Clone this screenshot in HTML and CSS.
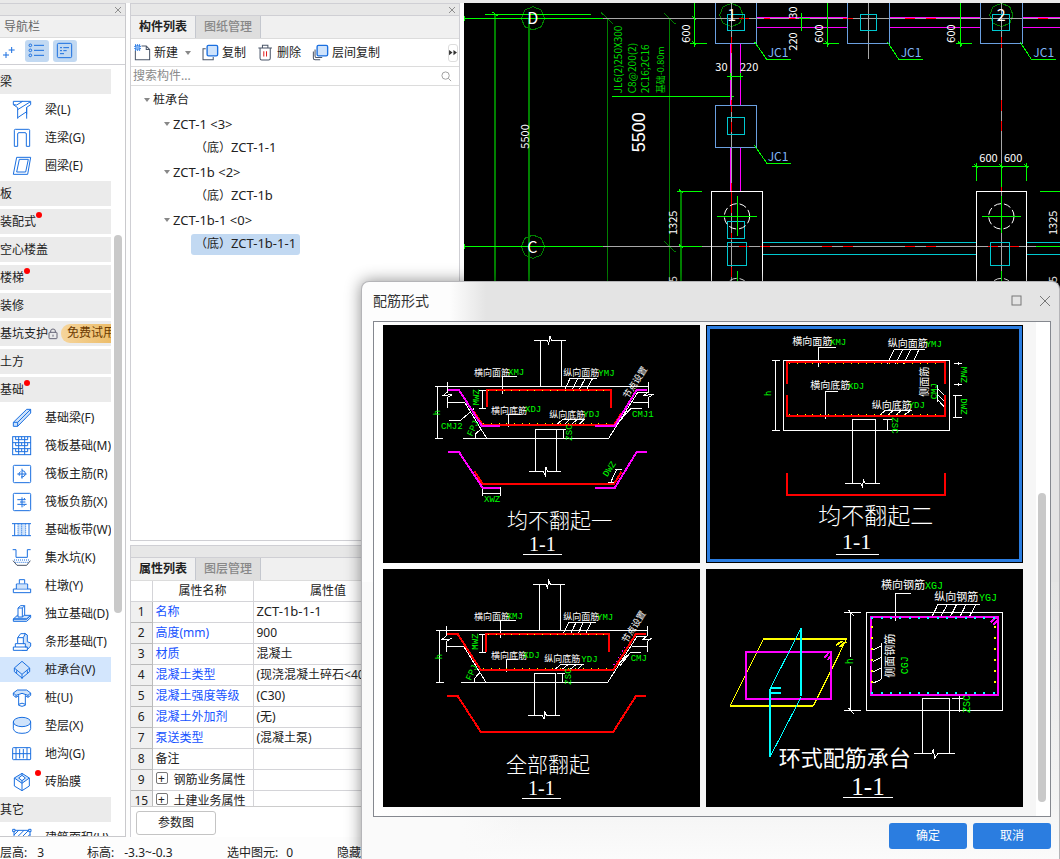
FILE: index.html
```html
<!DOCTYPE html>
<html lang="zh-CN">
<head>
<meta charset="utf-8">
<title>配筋形式</title>
<link rel="stylesheet" href="styles.css">
</head>
<body>
<div class="app">
  <div class="ribbon-edge"></div>
  <div class="workspace">
    <nav class="nav">
      <div class="panel-bar"><button class="panel-close" aria-label="关闭导航栏"><svg viewBox="0 0 8 8"><path d="M1 1L7 7M7 1L1 7"/></svg></button></div>
      <h2 class="nav-title">导航栏</h2>
      <div class="nav-tools">
        <button class="nav-tool plain" aria-label="添加"><svg viewBox="0 0 72 66"><path d="M27 36V54M18 45H36M44 21V39M35 30H53"/></svg></button>
        <button class="nav-tool" aria-label="列表"><svg viewBox="75 120 72 66"><circle cx="91" cy="136" r="4"/><circle cx="91" cy="151" r="4"/><circle cx="91" cy="166" r="4"/><path d="M102 136H132M102 151H132M102 166H132"/></svg></button>
        <button class="nav-tool" aria-label="详情"><svg viewBox="159 120 72 66"><rect x="172" y="130" width="43" height="43" rx="4"/><path d="M180 143H186M190 143H207M180 152H186M190 152H200M180 161H192"/></svg></button>
      </div>
      <div class="nav-body">
        <ul class="nav-list">
          <li class="group">梁</li>
          <li><button class="item"><svg class="ico" viewBox="36 297 60 60"><path d="M40 301H92V311L80 319V353M40 301V311L53 320V353M53 326L90 303M53 350L80 332M40 311L50 312L68 301M80 319V340"/></svg>梁(L)</button></li>
          <li><button class="item"><svg class="ico" viewBox="36 381 60 60"><path d="M43 436V388Q43 385 46 385H86Q89 385 89 388V436H79V399Q79 395 75 395H57Q53 395 53 399V436Z"/></svg>连梁(G)</button></li>
          <li><button class="item"><svg class="ico" viewBox="36 465 60 60"><path d="M50 469H92L83 520H40ZM58 475H85L77 513H50Z"/></svg>圈梁(E)</button></li>
          <li class="group">板</li>
          <li class="group">装配式<i class="dot"></i></li>
          <li class="group">空心楼盖</li>
          <li class="group">楼梯<i class="dot"></i></li>
          <li class="group">装修</li>
          <li class="group">基坑支护<svg class="lock" viewBox="0 0 30 36"><rect x="3" y="13" width="24" height="19" rx="2"/><path d="M8 13V9Q8 3 15 3Q22 3 22 9V13M15 20V26"/></svg><span class="trial">免费试用</span></li>
          <li class="group">土方</li>
          <li class="group">基础<i class="dot"></i></li>
          <li><button class="item"><svg class="ico" viewBox="36 366 60 60"><path class="f" d="M40 409L80 370H92V381L53 421H40Z"/><path d="M40 409H53V421M53 409L92 370"/></svg>基础梁(F)</button></li>
          <li><button class="item"><svg class="ico" viewBox="36 450 60 60"><rect x="38" y="452" width="54" height="54"/><path d="M38 470H92M38 488H92M56 452V506M74 452V506"/><path d="M47 452V461H65V452M65 461H83V452M47 470V479H65V470M65 479H83V470M47 488V497H65V488M65 497H83V488"/></svg>筏板基础(M)</button></li>
          <li><button class="item"><svg class="ico" viewBox="36 534 60 60"><rect x="40" y="538" width="52" height="52" rx="3"/><path d="M66 548V578M52 564H80M66 554Q76 554 76 562Q76 573 63 573M62 557Q54 560 58 569"/></svg>筏板主筋(R)</button></li>
          <li><button class="item"><svg class="ico" viewBox="36 618 60 60"><rect x="40" y="622" width="52" height="52" rx="3"/><path d="M52 641H76L72 636M52 655H80M60 648H76M66 634V664M76 655L70 661"/></svg>筏板负筋(X)</button></li>
          <li><button class="item"><svg class="ico" viewBox="36 702 60 60"><path class="f" stroke="none" d="M54 713H77V749H54Z"/><path d="M36 713H93M36 749H93M44 713V749M87 713V749"/><path stroke-dasharray="3 3" d="M54 713V749M65 713V749M77 713V749"/></svg>基础板带(W)</button></li>
          <li><button class="item"><svg class="ico" viewBox="36 786 60 60"><path d="M38 791H48V814H82V791H92"/><path stroke-dasharray="3 3" d="M42 822H90M46 829H86"/><path class="gray" d="M39 824L51 838H80L91 824"/></svg>集水坑(K)</button></li>
          <li><button class="item"><svg class="ico" viewBox="36 15 60 60"><path d="M58 38V26H74V38M49 54V39H83V54M40 54H92V65H40Z"/><path class="f" stroke="none" d="M51 41H81V52H51Z"/></svg>柱墩(Y)</button></li>
          <li><button class="item"><svg class="ico" viewBox="36 99 60 60"><path class="f" d="M40 144L52 133H92L80 144ZM40 144H80L92 133V140L80 151H40Z"/><path fill="#fff" d="M54 138V111L62 104H74V132L67 138Z"/><path d="M54 111H67V138M67 111L74 104"/></svg>独立基础(D)</button></li>
          <li><button class="item"><svg class="ico" viewBox="36 183 60 60"><path class="f" d="M80 238L92 225V216L82 212V192L74 187L66 200V238Z"/><path fill="#fff" d="M40 238V228H46V218H53V200L62 188H76L70 200V218H76V228H82V238Z"/><path d="M53 200H70M46 228H80M53 218H72"/></svg>条形基础(T)</button></li>
          <li><button class="item on"><svg class="ico" viewBox="36 267 60 60"><path class="f" d="M66 271L89 291L66 310L43 291Z"/><path d="M43 291V302L66 321M89 291V302L66 321M66 310V324M50 298V307M82 298V307"/></svg>桩承台(V)</button></li>
          <li><button class="item"><svg class="ico" viewBox="36 351 60 60"><path class="f" d="M40 366L52 357H80L92 366L84 373L66 367L48 373Z"/><path d="M40 366V373L48 379L56 374M92 366V373L84 379L76 374M48 373V379M84 373V379M56 373V403Q66 409 76 403V373M56 400Q66 393 76 400"/></svg>桩(U)</button></li>
          <li><button class="item"><svg class="ico" viewBox="36 435 60 60"><path d="M40 452V473Q43 487 66 487Q89 487 92 473V452"/><ellipse class="f" cx="66" cy="453" rx="26" ry="14"/></svg>垫层(X)</button></li>
          <li><button class="item"><svg class="ico" viewBox="36 519 60 60"><rect x="38" y="530" width="54" height="36" rx="2"/><path d="M38 548H92M48 530V566M59 534V562M70 534V562M81 530V566"/></svg>地沟(G)</button></li>
          <li><button class="item"><svg class="ico" viewBox="36 603 60 60"><path class="f" d="M66 607L88 621L66 637L43 621Z"/><path fill="#fff" d="M66 613L76 621L66 629L56 621Z"/><path d="M43 621V645L66 659L88 645V621M66 637V659M66 607V613M66 637V629"/></svg><i class="dot float"></i>砖胎膜</button></li>
          <li class="group">其它</li>
          <li><button class="item"><svg class="ico" viewBox="36 771 60 60"><path d="M42 778H90V826H42ZM42 792L56 778M42 808L72 778M42 822L86 778M54 826L90 790M70 826L90 806"/><path fill="#fff" d="M38 775H45V782H38ZM86 775H93V782H86Z"/></svg>建筑面积(U)</button></li>
        </ul>
        <div class="nav-scroll"></div>
      </div>
    </nav>

    <div class="side">
      <section class="panel components">
        <div class="panel-bar"><button class="panel-close" aria-label="关闭构件列表"><svg viewBox="0 0 8 8"><path d="M1 1L7 7M7 1L1 7"/></svg></button></div>
        <div class="tabs"><button class="tab active">构件列表</button><button class="tab">图纸管理</button></div>
        <div class="toolbar">
          <button class="tool"><svg class="tico" viewBox="18 130 50 50"><path class="gray" d="M22 149V176H64V146L54 136H40M54 136V146H64"/><path class="chk" d="M21 133H36V148H21Z"/></svg>新建<i class="caret"></i></button>
          <button class="tool"><svg class="tico" viewBox="220 130 50 50"><path class="gray" d="M231 144H223V176H253V168"/><rect class="f" x="235" y="134" width="31" height="31" rx="4"/></svg>复制</button>
          <button class="tool"><svg class="tico" viewBox="390 130 50 50"><path class="gray" d="M394 142H434M406 141V134H422V141M399 142V172Q399 177 404 177H424Q429 177 429 172V142"/><path class="red" d="M410 151V167M418 151V167"/></svg>删除</button>
          <button class="tool"><svg class="tico" viewBox="556 130 50 50"><path class="gray" d="M560 152V171Q560 176 565 176H580M565 146V165Q565 170 570 170H586"/><rect class="f" x="571" y="134" width="31" height="31" rx="4"/></svg>层间复制</button>
          <button class="more" aria-label="更多"><svg viewBox="0 0 9 8"><path d="M0 1L4 4L0 7ZM5 1L9 4L5 7Z"/></svg></button>
        </div>
        <div class="search"><input type="text" placeholder="搜索构件..." aria-label="搜索构件"><svg viewBox="0 0 12 12"><circle cx="5" cy="5" r="4"/><path d="M8 8L11 11"/></svg></div>
        <ul class="tree">
          <li class="t1"><i class="caret"></i>桩承台</li>
          <li class="t2"><i class="caret"></i><span class="code">ZCT-1 &lt;3&gt;</span></li>
          <li class="t3"><span class="leaf">（底）<span class="code">ZCT-1-1</span></span></li>
          <li class="t2"><i class="caret"></i><span class="code">ZCT-1b &lt;2&gt;</span></li>
          <li class="t3"><span class="leaf">（底）<span class="code">ZCT-1b</span></span></li>
          <li class="t2"><i class="caret"></i><span class="code">ZCT-1b-1 &lt;0&gt;</span></li>
          <li class="t3"><span class="leaf on">（底）<span class="code">ZCT-1b-1-1</span></span></li>
        </ul>
      </section>
      <section class="panel props">
        <div class="panel-bar"></div>
        <div class="tabs"><button class="tab active">属性列表</button><button class="tab">图层管理</button></div>
        <div class="table-wrap">
          <table>
            <colgroup><col class="c1"><col class="c2"><col class="c3"><col></colgroup>
            <thead><tr><th></th><th>属性名称</th><th>属性值</th><th></th></tr></thead>
            <tbody>
              <tr><td>1</td><td class="key">名称</td><td><span class="code">ZCT-1b-1-1</span></td><td></td></tr>
              <tr><td>2</td><td class="key">高度(mm)</td><td>900</td><td></td></tr>
              <tr><td>3</td><td class="key">材质</td><td>混凝土</td><td></td></tr>
              <tr><td>4</td><td class="key">混凝土类型</td><td>(现浇混凝土碎石&lt;40)</td><td></td></tr>
              <tr><td>5</td><td class="key">混凝土强度等级</td><td>(C30)</td><td></td></tr>
              <tr><td>6</td><td class="key">混凝土外加剂</td><td>(无)</td><td></td></tr>
              <tr><td>7</td><td class="key">泵送类型</td><td>(混凝土泵)</td><td></td></tr>
              <tr><td>8</td><td>备注</td><td></td><td></td></tr>
              <tr><td>9</td><td><button class="plus" aria-label="展开">+</button>钢筋业务属性</td><td></td><td></td></tr>
              <tr><td>15</td><td><button class="plus" aria-label="展开">+</button>土建业务属性</td><td></td><td></td></tr>
            </tbody>
          </table>
        </div>
        <div class="props-foot"><button class="btn-plain">参数图</button></div>
      </section>
    </div>

    <main class="canvas">
      <svg class="cad" viewBox="12 9 1788 2505" preserveAspectRatio="xMinYMin slice" role="img" aria-label="平面图">
        <g class="dg w6"><path d="M105 43V1200M207 55V1200M663 574V1200"/></g>
        <g class="dg w3"><path d="M442 55V1200M628 55V1200M424 38L459 72M611 38L646 72M611 722L646 756M588 55H628M588 739H628"/><path d="M219 20L244 30L254 55L244 80L219 90L194 80L184 55L194 30ZM219 705L244 715L254 740L244 765L219 775L194 765L184 740L194 715ZM814 10L839 20L849 45L839 70L814 80L789 70L779 45L789 20ZM1624 10L1649 20L1659 45L1649 70L1624 80L1599 70L1589 45L1599 20Z"/></g>
        <g class="gr w3"><path d="M430 55H1800M430 739H1800"/></g>
        <g class="g w3"><path d="M12 55H430M75 43H392M12 739H430M663 739H725M651 574H725M456 290H822M98 36L112 48M656 568L670 580M656 733L670 745M12 48V62M12 732V746"/></g>
        <g class="mg w3"><path d="M812 130V316M812 441V574M842 130V316M842 441V574M890 52H1162M890 82H1162M1288 52H1562M1288 82H1562M1688 52H1800M1688 82H1800"/></g>
        <g class="gr w3"><path d="M815 9V1200M890 55H1162M1225 9V176M1624 9V1200"/></g>
        <g class="rd w3"><path d="M815 112V160M815 300V335M815 365V395M815 550V640M815 700V720M815 800V830M1624 110V145M1624 300V333M1624 362V394M1624 546V576M837 55H868M912 55H930M986 55H1008M1148 55H1180M1335 55H1365M1397 55H1428M1735 55H1765M837 739H868M900 739H930M1086 739H1116M1148 739H1179M1335 739H1365M1397 739H1428M1583 739H1614M1650 739H1677"/></g>
        <g class="bl w3"><path d="M765 9V130H890V9M765 316H890V441H765ZM1162 9V130H1288V9M1561 9V130H1687V9"/></g>
        <g class="cy w3"><path d="M802 43H853V92H802ZM802 353H853V403H802ZM802 664H853V715H802ZM802 727H859V796H802ZM1201 43H1250V92H1201ZM1597 43H1649V92H1597ZM1592 727H1649V796H1592ZM906 727H1550M906 764H1550M1700 727H1800M1700 764H1800"/></g>
        <g class="wh w3"><path d="M755 1200V574H906V1200M1550 1200V574H1700V1200"/><circle cx="831" cy="649" r="38" stroke-dasharray="22 9"/><circle cx="1624" cy="649" r="38" stroke-dasharray="22 9"/><circle cx="831" cy="873" r="38" stroke-dasharray="22 9"/><circle cx="1624" cy="873" r="38" stroke-dasharray="22 9"/></g>
        <g class="g w3"><path d="M771 649H890M831 588V708M1565 649H1684M1624 588V700M1624 812V850M831 812V850M703 9V142M690 130H741M1102 9V142M1090 130H1138M1500 9V142M1488 130H1536M1024 40V92M800 229H850M812 220V240M842 220V240M1018 55H1050M1537 499H1708M1549 490V544M1699 490V544M1624 490V560M1740 574H1800M1727 739H1800M883 125L920 178H992M1282 125L1316 178H1390M1680 125L1714 178H1788M883 436L920 489H992M697 124L709 136M697 49L709 61M1096 124L1108 136M1494 124L1506 136M1543 493L1555 505M1618 493L1630 505M1693 493L1705 505"/></g>
        <g class="cad-text">
          <text class="t48" x="202" y="73">D</text><text class="t48" x="202" y="758">C</text>
          <text class="t48" x="802" y="64">1</text><text class="t48" x="1610" y="64">2</text>
          <text class="t33" transform="translate(206 446) rotate(-90)">5500</text>
          <text class="wide" transform="translate(555 457) rotate(-90)">5500</text>
          <text class="t33" transform="translate(689 128) rotate(-90)">600</text>
          <text class="t33" transform="translate(1088 128) rotate(-90)">600</text>
          <text class="t33" transform="translate(1486 128) rotate(-90)">600</text>
          <text class="t33" transform="translate(1011 56) rotate(-90)">30</text>
          <text class="t33" transform="translate(1011 152) rotate(-90)">220</text>
          <text class="t33" transform="translate(650 705) rotate(-90)">1325</text>
          <text class="t33" transform="translate(1792 705) rotate(-90)">1325</text>
          <text class="t33" transform="translate(650 902) rotate(-90)">1325</text>
          <text class="t33" transform="translate(1792 902) rotate(-90)">1325</text>
          <text class="t33" x="766" y="214">30</text><text class="t33" x="840" y="214">220</text>
          <text class="t33" x="1558" y="486">600</text><text class="t33" x="1632" y="486">600</text>
        </g>
        <g class="cad-text green">
          <text class="t30" transform="translate(486 280) rotate(-90)">JL6(2)250X300</text>
          <text class="t30" transform="translate(528 280) rotate(-90)">C8@200(2)</text>
          <text class="t30" transform="translate(566 280) rotate(-90)">2C16;2C16</text>
          <text class="t27" transform="translate(612 280) rotate(-90)">基础-0.80m</text>
        </g>
        <g class="cad-text blue">
          <text class="t36" x="923" y="172">JC1</text><text class="t36" x="1322" y="172">JC1</text><text class="t36" x="1720" y="172">JC1</text><text class="t36" x="923" y="483">JC1</text>
        </g>
      </svg>
    </main>
  </div>
  <footer class="status"><span class="s1">层高:<b>3</b></span><span class="s2">标高:<b>-3.3~-0.3</b></span><span class="s3">选中图元:<b>0</b></span><span>隐藏图元:</span></footer>

  <div class="dialog" role="dialog" aria-label="配筋形式">
    <header class="dlg-head">
      <h1>配筋形式</h1>
      <button aria-label="最大化"><svg viewBox="0 0 12 12"><rect x="1" y="1" width="9" height="9"/></svg></button>
      <button aria-label="关闭"><svg viewBox="0 0 12 12"><path d="M1 1L11 11M11 1L1 11"/></svg></button>
    </header>
    <div class="frame">
      <div class="cards">
        <button class="card" aria-label="均不翻起一">
          <svg viewBox="69 135 951 714">
            <g class="wh w3"><path d="M523 181H562L566 192L570 168L574 181H617M542 181V319M604 181V319M242 319H866M263 307V336L250 346L276 344L263 352V383M263 367H314M866 307V336L852 346L878 344L866 352V383M866 367H818M866 336H834L746 475M309 475H746M314 367L380 475M225 319H249M225 475H249M232 319V475M428 341V289H471M445 441V404H484M526 475V448H589V475M526 475V574M589 475V574M508 574H550L556 586L558 562L562 574H603M592 448H619M610 448V475M612 334L630 295H712M635 332L654 295M656 332L676 295M678 332L698 295M590 434L608 418H674M612 434L630 418M634 434L652 418M656 434L672 418M366 331V385M357 331H378M357 385H378M268 421H302L342 386M847 385H814L776 424M808 390L782 420M800 392L790 412M346 474V462L362 448M367 622V647M421 622V647M367 640H421M766 568H786M770 568L750 612M745 607H762"/></g>
            <g class="rd w6"><path d="M381 382V330H753V383M341 394L368 435H762L784 400M343 574L368 612H762L784 576"/></g>
            <g class="mg w6"><path d="M263 330H297L366 438H420M861 330H830L764 438H705M264 516H297L368 624H420M861 516H830L764 624H705"/></g>
            <g class="ye"><path d="M385 331H750M370 431H760"/></g>
            <g class="lab"><text x="342" y="287">横向面筋</text><text x="610" y="289">纵向面筋</text><text x="393" y="403">横向底筋</text><text x="568" y="415">纵向底筋</text><text transform="translate(804 358) rotate(-57)">节点设置</text></g>
            <g class="grn"><text x="444" y="285">XMJ</text><text x="715" y="288">YMJ</text><text x="495" y="396">XDJ</text><text x="670" y="411">YDJ</text><text x="243" y="446">CMJ2</text><text x="816" y="410">CMJ1</text><text x="372" y="665">XWZ</text><text transform="translate(356 376) rotate(-90)">MWZ</text><text transform="translate(240 406) rotate(-90)">h</text><text transform="translate(636 482) rotate(-90)">ZSC</text><text transform="translate(336 470) rotate(-65)">FPJ</text><text transform="translate(742 592) rotate(-57)">DWZ</text></g>
            <text class="cap" x="441" y="743">均不翻起一</text><text class="num" x="507" y="812">1-1</text><path class="wh w3" d="M489 823H606"/>
          </svg>
        </button>
        <button class="card selected" aria-label="均不翻起二">
          <svg viewBox="18 135 951 714">
            <g class="wh w3"><path d="M250 241H749V451H250ZM216 241H240M216 451H240M226 241V451M457 610V418H527V610M435 610H482L488 621L490 598L496 610H540M356 261V202H408M377 416V334H414M562 252L583 208H675M586 252L609 208M610 252L633 208M637 252L657 208M538 407L556 391H636M562 407L580 391M586 407L604 391M610 407L632 391M549 418H576M563 418V451M763 250H786M763 313H786M775 246V256M775 308V318M760 346H786M760 412H786M766 346V412M712 316V365M712 325L736 350M712 342L736 368M712 358L736 384"/></g>
            <g class="rd w6"><path d="M261 312V246H735V312M261 346V408H735V346M261 579V645H735V579"/></g>
            <g class="ye"><path d="M268 250H730M268 403H730"/></g>
            <g class="lab l30"><text x="277" y="196">横向面筋</text><text x="563" y="202">纵向面筋</text><text x="331" y="328">横向底筋</text><text x="515" y="386">纵向底筋</text><text transform="translate(683 350) rotate(-90)">侧面筋</text></g>
            <g class="grn"><text x="390" y="194">XMJ</text><text x="677" y="200">YMJ</text><text x="444" y="326">XDJ</text><text x="626" y="383">YDJ</text><text transform="translate(710 358) rotate(-90)">CMJ</text><text transform="translate(782 260) rotate(90)">MWZ</text><text transform="translate(782 355) rotate(90)">DWZ</text><text transform="translate(576 412) rotate(90)">ZSC</text><text transform="translate(214 348) rotate(-90)">h</text></g>
            <text class="cap c69" x="355" y="731">均不翻起二</text><text class="num n66" x="426" y="808">1-1</text><path class="wh w3" d="M408 823H537"/>
          </svg>
        </button>
        <button class="card" aria-label="全部翻起">
          <svg viewBox="69 12 951 714">
            <g class="wh w3"><path d="M519 58H558L563 69L566 46L571 58H614M539 58V196M601 58V196M228 196H862M259 184V213L246 223L270 222L259 229V260M259 244H311M862 184V213L848 223L872 222L862 229V260M862 244H816M862 213H832L743 352M303 352H743M311 244L378 352M228 352H252M238 196V352M422 218V166H468M440 320V283H474M523 352V325H586V352M523 352V451M586 352V451M505 451H546L552 463L554 439L559 451H600M590 325H616M608 325V352M607 211L626 172H708M630 211L648 172M652 211L670 172M674 211L694 172M586 312L604 297H672M608 312L626 297M632 312L650 297M654 312L670 297M366 208V262M357 208H378M357 262H378M844 262H812L770 301M806 270L780 302M800 273L788 292M344 352V340L358 324"/></g>
            <g class="rd w6"><path d="M261 207H293L362 315H760L828 207H858M378 262V207H747V261M261 393H293L362 500H760L828 393H858"/></g>
            <g class="ye"><path d="M385 208H742M370 310H756"/></g>
            <path class="mgdots" d="M794 246L760 303"/>
            <g class="lab"><text x="342" y="164">横向面筋</text><text x="610" y="166">纵向面筋</text><text x="393" y="281">横向底筋</text><text x="553" y="292">纵向底筋</text><text transform="translate(800 236) rotate(-57)">节点设置</text></g>
            <g class="grn"><text x="440" y="163">XMJ</text><text x="711" y="166">YMJ</text><text x="490" y="278">XDJ</text><text x="664" y="290">YDJ</text><text x="812" y="288">CMJ</text><text transform="translate(354 254) rotate(-90)">MWZ</text><text transform="translate(246 283) rotate(-90)">h</text><text transform="translate(634 359) rotate(-90)">ZSC</text><text transform="translate(332 348) rotate(-65)">FPJ</text></g>
            <text class="cap" x="438" y="621">全部翻起</text><text class="num" x="504" y="689">1-1</text><path class="wh w3" d="M486 700H603"/>
          </svg>
        </button>
        <button class="card" aria-label="环式配筋承台">
          <svg viewBox="18 12 951 714">
            <g class="wh w3"><path d="M500 142H908V436H500ZM432 142H483M432 436H483M452 142V276M452 302V436M446 136L461 152M446 430L461 446M587 167V85H633M694 159L714 118H840M720 159L742 118M749 159L770 118M778 159L798 118M806 159L828 118M668 565V400H748V565M642 565H696L700 552L704 580L714 565H765M756 400H790M778 394V442M544 234V343M518 256L544 243M518 290L544 277M518 322L544 309M518 355L544 343"/></g>
            <g class="ylw"><path class="w6" d="M190 222H440M90 423H340M408 240L428 228M418 246L438 230"/><path class="w3" d="M190 222L90 423M440 222L340 423"/></g>
            <g class="mg w6"><path d="M138 261H393V402H138ZM513 156H894V390H513ZM374 278L386 262M382 286L392 274M872 172L888 158M880 180L892 166"/></g>
            <g class="cyb"><path class="w6" d="M303 190V393M210 372V576M212 369H243M212 383H243"/><path class="w3" d="M303 190L210 372M303 397L210 576"/></g>
            <g class="dots"><path class="c" d="M514 160H890M514 383H890"/><path class="y" d="M517 184V360M886 184V360"/></g>
            <g class="lab l33"><text x="543" y="72">横向钢筋</text><text x="703" y="108">纵向钢筋</text><text transform="translate(582 338) rotate(-90)">侧面钢筋</text></g>
            <g class="grn g30"><text x="675" y="72">XGJ</text><text x="837" y="108">YGJ</text><text transform="translate(624 328) rotate(-90)">CGJ</text><text transform="translate(810 444) rotate(-90)">ZSC</text><text transform="translate(460 298) rotate(-90)">h</text></g>
            <text class="cap bold" x="236" y="604">环式配筋承台</text><text class="num n75" x="454" y="689">1-1</text><path class="wh w3" d="M429 697H579"/>
          </svg>
        </button>
      </div>
      <div class="dlg-track"><div class="dlg-thumb"></div></div>
    </div>
    <div class="dlg-foot"><button class="primary">确定</button><button class="primary">取消</button></div>
  </div>
</div>
</body>
</html>
```
FILE: styles.css
```css
* { box-sizing: border-box; }
html, body { height: 100%; margin: 0; }
body { font: 12px/18px "Noto Sans", "Noto Sans CJK SC", sans-serif; color: #222; background: #fdfdfd; overflow: hidden; }
button, input { font: inherit; color: inherit; }
button { border: 0; background: none; padding: 0; margin: 0; white-space: nowrap; }
ul { list-style: none; margin: 0; padding: 0; }
h1, h2 { margin: 0; font-weight: 400; }
svg { display: block; fill: none; }

.app { position: relative; height: 100vh; display: flex; flex-direction: column; overflow: hidden; }
.ribbon-edge { height: 3px; background: #e9e9e9; flex: none; }
.workspace { flex: 1; min-height: 0; display: flex; }

.panel-bar { height: 12px; background: #e7e7e7; border-bottom: 1px solid #cfcfd4; display: flex; justify-content: flex-end; padding: 0 3px; flex: none; }
.panel-close svg { width: 8px; height: 8px; stroke: #8f8f8f; }

.nav { width: 126px; flex: none; border-right: 1px solid #c9c9cc; border-top: 1px solid #cfcfd4; border-bottom: 1px solid #c9c9cc; display: flex; flex-direction: column; background: #fff; }
.nav-title { font-size: 12px; height: 22px; line-height: 21px; padding-left: 4px; color: #666; background: #f0f0f0; border-bottom: 1px solid #dcdcdc; flex: none; }
.nav-tools { height: 27px; display: flex; align-items: center; gap: 4px; border-bottom: 1px solid #cfcfd4; flex: none; }
.nav-tool { width: 24px; height: 22px; border-radius: 3px; background: #c2d9f2; flex: none; }
.nav-tool.plain { background: none; width: 21px; overflow: hidden; }
.nav-tool svg { width: 24px; height: 22px; stroke: #1a6fe0; stroke-width: 3; }
.nav-tool.plain svg { margin-left: -3px; }
.nav-body { flex: 1; min-height: 0; display: flex; gap: 3px; overflow: hidden; padding-top: 4px; }
.nav-list { width: 111px; overflow: hidden; }
.nav-list li { height: 25px; margin-bottom: 3px; overflow: hidden; }
.group { background: #ebebeb; display: flex; align-items: center; white-space: nowrap; }
.item { position: relative; width: 100%; height: 25px; padding-left: 12px; display: flex; align-items: center; gap: 13px; overflow: hidden; }
.item.on { background: #d3e6fd; }
.ico { width: 20px; height: 20px; flex: none; stroke: #1a6fe0; stroke-width: 3; }
.ico .f, .tico .f { fill: #cfe3fb; }
.ico .gray, .tico .gray { stroke: #4a5568; }
.dot { width: 6px; height: 6px; border-radius: 50%; background: #f00; margin-bottom: 14px; flex: none; }
.dot.float { position: absolute; left: 35px; top: 1px; margin: 0; }
.lock { width: 10px; height: 12px; stroke: #667; stroke-width: 3; flex: none; }
.trial { margin-left: 3px; padding: 0 6px; height: 19px; border-radius: 9px 0 0 9px; background: linear-gradient(90deg, #f6d59c, #eab860); color: #6b3a00; flex: none; }
.nav-scroll { width: 8px; height: 378px; margin-top: 166px; border-radius: 4px; background: #c9c9c9; flex: none; }

.side { width: 338px; flex: none; padding: 0 4px; display: flex; flex-direction: column; gap: 4px; }
.panel { border: 1px solid #cfcfd4; background: #fff; display: flex; flex-direction: column; min-height: 0; }
.components { flex: 538; }
.props { flex: 292; overflow: hidden; border-bottom: 0; }
.tabs { height: 23px; display: flex; background: #f0f0f0; border-bottom: 1px solid #dcdcdc; flex: none; }
.tab { width: 65px; color: #888; background: #dedede; border-right: 1px solid #c4c7ce; font-weight: 500; }
.tab.active { color: #222; background: #f0f0f0; font-weight: 700; }
.toolbar { height: 28px; display: flex; align-items: center; padding: 0 1px 0 3px; gap: 11px; border-bottom: 1px solid #dcdcdc; flex: none; }
.tool { display: flex; align-items: center; gap: 3px; }
.tico { width: 17px; height: 17px; stroke: #1a6fe0; stroke-width: 4; }
.tico .gray { stroke-width: 3; }
.tico .red { stroke: #e02020; stroke-width: 3; }
.tico .chk { stroke-dasharray: 3 3; fill: #7fb2f2; }
.caret { width: 0; height: 0; border: 3px solid transparent; border-top: 4px solid #888; border-bottom: 0; flex: none; }
.tool .caret { margin-left: 4px; }
.more { margin-left: auto; width: 10px; height: 18px; border: 1px solid #ddd; border-radius: 3px; }
.more svg { width: 8px; height: 7px; fill: #333; }
.search { height: 19px; display: flex; align-items: center; padding: 0 7px 0 2px; border-bottom: 1px solid #dcdcdc; flex: none; }
.search input { flex: 1; min-width: 0; border: 0; padding: 0; height: 17px; outline: 0; background: none; }
.search input::placeholder { color: #8a8a8a; opacity: 1; }
.search svg { width: 11px; height: 11px; stroke: #999; }
.tree { padding-top: 2px; flex: 1; overflow: hidden; }
.tree li { height: 24px; display: flex; align-items: center; white-space: nowrap; gap: 3px; }
.tree .t1 { padding-left: 13px; }
.tree .t2 { padding-left: 33px; }
.tree .t3 { padding-left: 60px; }
.code { font-size: 13px; line-height: 16px; }
.leaf { height: 21px; line-height: 20px; padding: 0 4px; border-radius: 3px; }
.leaf.on { background: #c2d9f2; }

.table-wrap { flex: 1; min-height: 0; overflow: hidden; border-bottom: 1px solid #ccc; }
table { width: 100%; border-collapse: collapse; table-layout: fixed; }
.c1 { width: 21px; } .c2 { width: 101px; } .c3 { width: 150px; }
th, td { height: 21px; padding: 0 3px; line-height: 18px; font-weight: 400; text-align: left; border-right: 1px solid #d4d4d8; border-bottom: 1px solid #d4d4d8; white-space: nowrap; overflow: hidden; }
th { text-align: center; height: 20px; }
td:first-child { background: #f0f0f0; padding: 0; text-align: center; border-color: #bbb; }
.key { color: #1653ff; }
.plus { width: 12px; height: 12px; border: 1px solid #777; border-radius: 2px; line-height: 9px; font-size: 12px; margin-right: 6px; vertical-align: 1px; }
.props-foot { height: 30px; padding: 4px 5px 2px; flex: none; }
.btn-plain { width: 80px; height: 24px; border: 1px solid #c4c4c4; border-radius: 3px; background: #fff; }

.status { height: 22px; flex: none; display: flex; align-items: flex-end; line-height: 12px; background: #fdfdfd; white-space: nowrap; }
.status b { font-weight: 400; margin-left: 10px; }
.status .s1 { width: 87px; } .status .s2 { width: 140px; } .status .s3 { width: 110px; }
.status .s3 b { margin-left: 8px; }

.canvas { flex: 1; min-width: 0; background: #000; overflow: hidden; }
.cad { width: 100%; height: 100%; }
.w3 { stroke-width: 3; } .w6 { stroke-width: 6; }
.g { stroke: #0f0; } .dg { stroke: #008000; } .gr { stroke: #a8a8a8; } .mg { stroke: #f0f; }
.rd { stroke: #f00; } .bl { stroke: #6a9fe0; } .cy { stroke: #00c8d0; } .wh { stroke: #fff; }
.cad path { shape-rendering: crispEdges; }
.ylw { stroke: #ff0; } .cyb { stroke: #0ff; }
.cad-text { fill: #fff; font-family: "Noto Sans CJK SC", sans-serif; }
.cad-text.green { fill: #0d0; } .cad-text.blue { fill: #7fb4f5; }
.t48 { font-size: 48px; } .t36 { font-size: 36px; } .t33 { font-size: 33px; } .t30 { font-size: 30px; } .t27 { font-size: 27px; }
.wide { font-size: 54px; font-family: "Liberation Sans", sans-serif; }

.dialog { position: absolute; left: 361px; right: 0; top: 281px; bottom: 0; display: flex; flex-direction: column; border: 1px solid #b5b5b8; border-bottom: 0; border-radius: 8px 8px 0 0; box-shadow: 0 0 16px rgba(0, 0, 0, .45); background: linear-gradient(90deg, #fdfdfd 88px, #e4e4e4 124px) top / 100% 300px no-repeat, #fafafa; padding: 0 8px 10px 11px; }
.dialog::before { content: ""; position: absolute; inset: 300px 0 0 100px; background: linear-gradient(90deg, #fafafa, transparent 60px), linear-gradient(#e6e6e6, #f4f4f4 80%, #fbfbfb); }
.dialog > * { position: relative; }
.dlg-head { height: 39px; padding-bottom: 2px; display: flex; align-items: center; gap: 16px; flex: none; }
.dlg-head h1 { font-size: 14px; flex: 1; color: #333; }
.dlg-head svg { width: 12px; height: 12px; stroke: #777; }
.frame { flex: 1; min-height: 0; border: 1px solid #85888f; background: linear-gradient(90deg, #fff, #f6f6f6 100px); display: flex; justify-content: space-between; overflow: hidden; }
.cards { flex: 1; display: grid; grid-template-columns: 1fr 1fr; gap: 6px; align-content: start; padding: 3px 13px 0 9px; }
.card { position: relative; display: block; background: #000; }
.card svg { width: 100%; height: auto; }
.card.selected::after { content: ""; position: absolute; inset: 1px; border: 3px solid #2b7de0; }
.dlg-track { width: 14px; background: #fff; padding-top: 171px; display: flex; justify-content: center; padding-right: 2px; flex: none; }
.dlg-thumb { width: 8px; height: 309px; border-radius: 4px; background: #c9c9c9; }
.dlg-foot { display: flex; justify-content: flex-end; gap: 6px; padding-top: 6px; flex: none; }
.primary { width: 78px; height: 26px; border-radius: 3px; background: #2b7de0; color: #fff; }
.card svg path { shape-rendering: crispEdges; }
.ye { stroke: #ff0; stroke-width: 3; stroke-dasharray: 3 20; }
.mgdots { stroke: #f0f; stroke-width: 4; stroke-dasharray: 3 9; }
.dots .c { stroke: #0ff; stroke-width: 6; stroke-dasharray: 6 22; }
.dots .y { stroke: #ff0; stroke-width: 6; stroke-dasharray: 6 27; }
.lab { fill: #fff; font: 27px "Noto Sans CJK SC", sans-serif; }
.l30 { font-size: 30px; } .l33 { font-size: 33px; }
.grn { fill: #0f0; font: 27px "Liberation Mono", monospace; }
.g30 { font-size: 30px; }
.cap { fill: #fff; font: 300 63px "Noto Sans CJK SC", sans-serif; }
.c69 { font-size: 69px; } .bold { font-size: 66px; font-weight: 400; }
.num { fill: #fff; font: 60px "Liberation Serif", serif; }
.n66 { font-size: 66px; } .n75 { font-size: 75px; }
```
